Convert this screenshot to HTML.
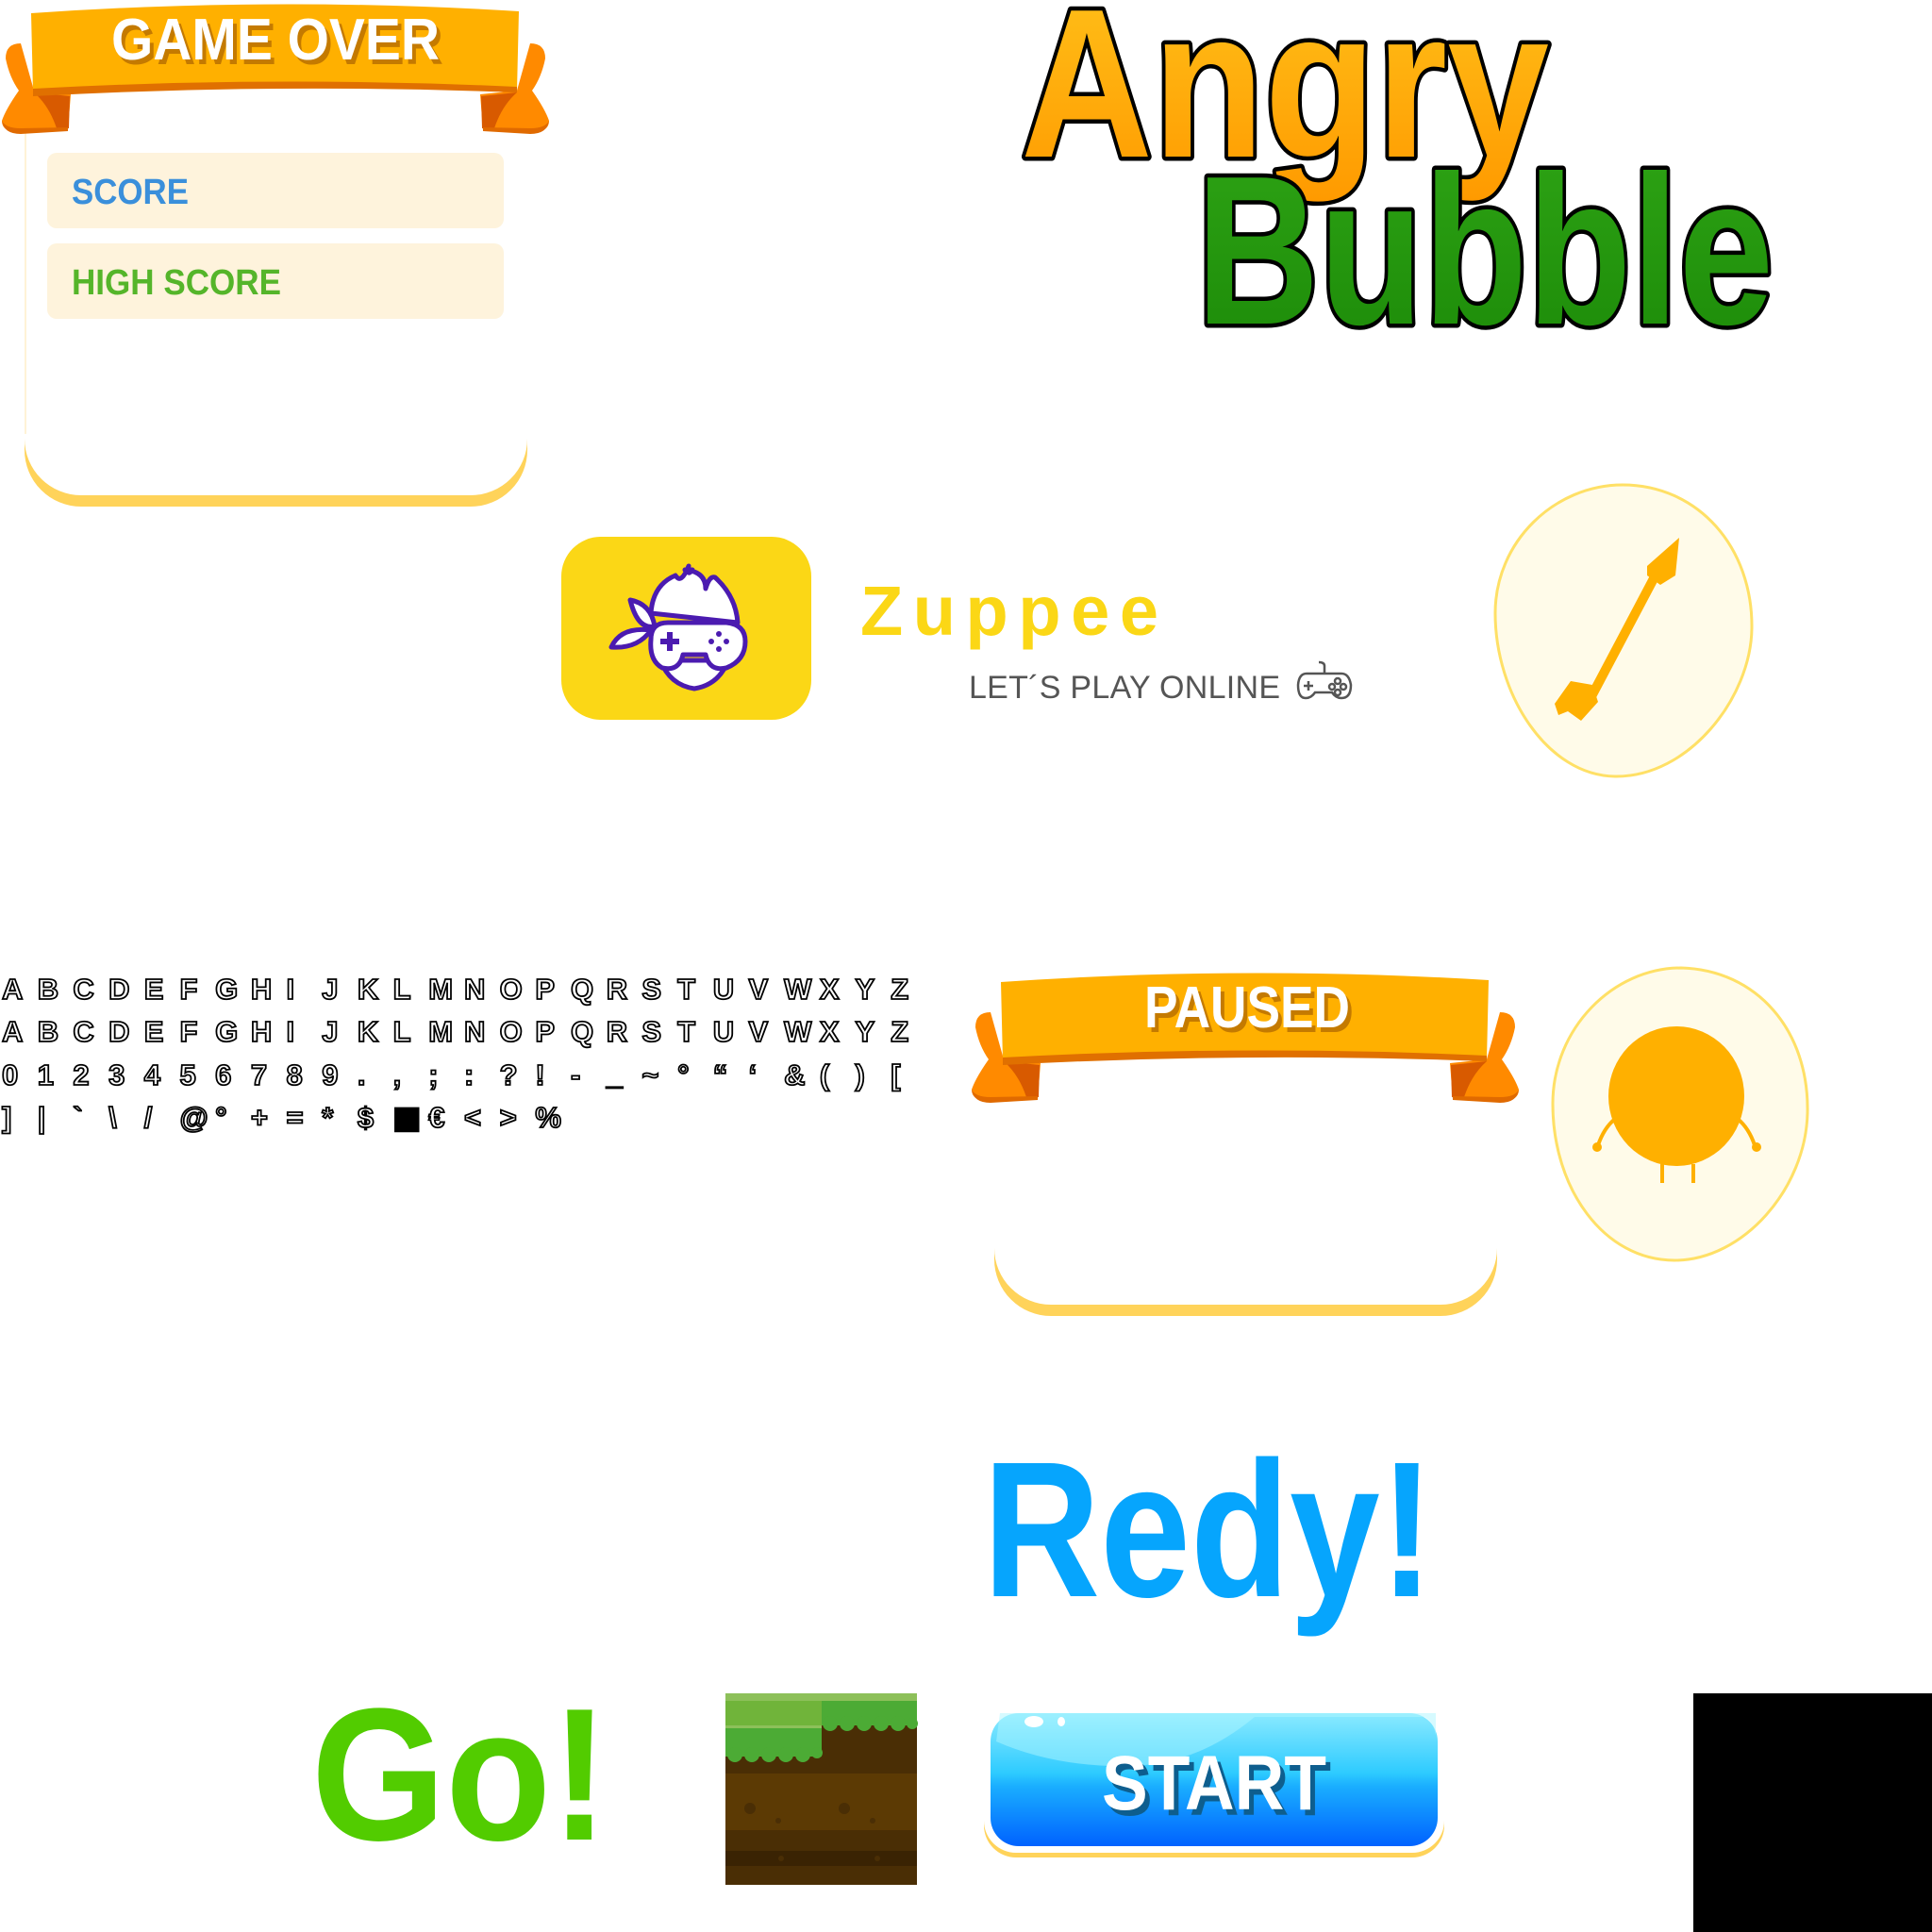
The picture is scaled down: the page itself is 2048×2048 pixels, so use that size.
<!DOCTYPE html>
<html><head><meta charset="utf-8"><style>
html,body{margin:0;padding:0;background:#fff;}
body{width:2048px;height:2048px;position:relative;overflow:hidden;font-family:"Liberation Sans",sans-serif;}
svg{position:absolute;left:0;top:0;}
.row{position:absolute;left:2px;display:flex;font-weight:bold;font-size:31px;color:#fff;-webkit-text-stroke:1.8px #000;line-height:34px;}
.row span{display:block;width:37.7px;text-align:left;}
</style></head><body>
<svg width="2048" height="2048" viewBox="0 0 2048 2048">
<defs>
<linearGradient id="og" x1="0" y1="0" x2="0" y2="1"><stop offset="0" stop-color="#FFC21A"/><stop offset="1" stop-color="#FF9A00"/></linearGradient>
<linearGradient id="gg" x1="0" y1="0" x2="0" y2="1"><stop offset="0" stop-color="#2EA415"/><stop offset="1" stop-color="#1C8A08"/></linearGradient>
<linearGradient id="bg" x1="0" y1="0" x2="0" y2="1"><stop offset="0" stop-color="#8BEAFF"/><stop offset="0.45" stop-color="#2ECBFF"/><stop offset="0.55" stop-color="#1AAEFF"/><stop offset="1" stop-color="#0062FF"/></linearGradient>
<g id="ribL">
<path d="M22 46 Q6 46 6 62 Q10 82 20 96 Q6 116 2 128 Q2 140 20 140 L72 138 L75 100 L36 96 Z" fill="#FF8A00"/>
<path d="M36 98 L74 102 L73 136 L60 136 Q52 112 36 98 Z" fill="#D85A00"/>
<path d="M2 128 Q4 142 22 142 L72 139 L72 135 L22 136 Q6 136 2 128 Z" fill="#E06A00"/>
</g>
</defs>

<!-- GAME OVER panel -->
<g>
<rect x="26" y="112" width="533" height="425" rx="60" fill="#FFD35A"/>
<rect x="26" y="100" width="533" height="425" rx="60" fill="#fff"/>
<rect x="26" y="100" width="2" height="360" fill="#FFF3D6"/>
<use href="#ribL"/>
<use href="#ribL" transform="translate(584,0) scale(-1,1)"/>
<path d="M33 14 Q292 -4 550 12 L548 96 Q292 82 35 98 Z" fill="#FFB000"/>
<path d="M35 94 Q292 80 548 92 L548 98 Q292 88 35 102 Z" fill="#E07000"/>
<text x="296" y="68" text-anchor="middle" font-family="Liberation Sans" font-weight="bold" font-size="62" fill="#C47A00" textLength="348" lengthAdjust="spacingAndGlyphs">GAME OVER</text>
<text x="292" y="63" text-anchor="middle" font-family="Liberation Sans" font-weight="bold" font-size="62" fill="#fff" textLength="348" lengthAdjust="spacingAndGlyphs">GAME OVER</text>
<rect x="50" y="162" width="484" height="80" rx="10" fill="#FEF3DC"/>
<rect x="50" y="258" width="484" height="80" rx="10" fill="#FEF3DC"/>
<text x="76" y="216" font-family="Liberation Sans" font-weight="bold" font-size="38" fill="#3A8FDB" textLength="124" lengthAdjust="spacingAndGlyphs">SCORE</text>
<text x="76" y="312" font-family="Liberation Sans" font-weight="bold" font-size="38" fill="#55B52A" textLength="222" lengthAdjust="spacingAndGlyphs">HIGH SCORE</text>
</g>

<!-- PAUSED panel -->
<g transform="translate(1028,1027)">
<rect x="26" y="80" width="533" height="288" rx="60" fill="#FFD35A"/>
<rect x="26" y="70" width="533" height="286" rx="60" fill="#fff"/>
<use href="#ribL"/>
<use href="#ribL" transform="translate(584,0) scale(-1,1)"/>
<path d="M33 14 Q292 -4 550 12 L548 96 Q292 82 35 98 Z" fill="#FFB000"/>
<path d="M35 94 Q292 80 548 92 L548 98 Q292 88 35 102 Z" fill="#E07000"/>
<text x="298" y="67" text-anchor="middle" font-family="Liberation Sans" font-weight="bold" font-size="62" fill="#C47A00" textLength="218" lengthAdjust="spacingAndGlyphs">PAUSED</text>
<text x="294" y="62" text-anchor="middle" font-family="Liberation Sans" font-weight="bold" font-size="62" fill="#fff" textLength="218" lengthAdjust="spacingAndGlyphs">PAUSED</text>
</g>

<!-- Angry Bubble -->
<text x="1082" y="166" font-family="Liberation Sans" font-weight="bold" font-size="225" fill="url(#og)" stroke="#000" stroke-width="9" stroke-linejoin="round" paint-order="stroke" textLength="560" lengthAdjust="spacingAndGlyphs">Angry</text>
<text x="1268" y="343" font-family="Liberation Sans" font-weight="bold" font-size="225" fill="url(#gg)" stroke="#000" stroke-width="9" stroke-linejoin="round" paint-order="stroke" textLength="612" lengthAdjust="spacingAndGlyphs">Bubble</text>

<!-- Zuppee icon -->
<rect x="595" y="569" width="265" height="194" rx="42" fill="#FBD716"/>
<g fill="#fff" stroke="#4B1BB0" stroke-width="5" stroke-linejoin="round">
<path d="M690 650 Q692 620 716 610 Q722 620 730 600 Q728 612 734 604 L726 604 Q748 606 748 624 Q752 610 758 612 Q780 632 782 660 Z"/>
<path d="M700 700 Q710 726 736 730 Q762 726 772 700 Z"/>
<path d="M668 636 Q690 640 694 664 Q676 668 668 636 Z"/>
<path d="M648 686 Q658 664 690 668 Q676 688 648 686 Z"/>
<path d="M690 678 Q690 660 708 660 L770 660 Q790 662 790 680 Q790 700 770 708 Q752 712 748 694 L724 694 Q720 712 702 708 Q688 700 690 678 Z"/>
</g>
<g fill="#4B1BB0">
<rect x="700" y="677" width="20" height="6"/><rect x="707" y="670" width="6" height="20"/>
<circle cx="762" cy="672" r="3"/><circle cx="770" cy="680" r="3"/><circle cx="762" cy="688" r="3"/><circle cx="754" cy="680" r="3"/>
</g>

<!-- Zuppee text -->
<text x="912" y="673" font-family="Liberation Sans" font-weight="bold" font-size="74" fill="#FBD716" textLength="316">Zuppee</text>
<text x="1027" y="740" font-family="Liberation Sans" font-size="34" fill="#555" textLength="330">LET´S PLAY ONLINE</text>
<g fill="none" stroke="#555" stroke-width="2.5">
<path d="M1385 714 Q1377 714 1376 726 Q1376 740 1384 740 Q1390 740 1394 734 L1412 734 Q1416 740 1422 740 Q1432 740 1432 726 Q1430 714 1422 714 Z"/>
<path d="M1404 714 L1404 706 Q1404 702 1398 702"/>
<path d="M1382 727 L1392 727 M1387 722 L1387 732"/>
<circle cx="1418" cy="722" r="3"/><circle cx="1424" cy="728" r="3"/><circle cx="1418" cy="734" r="3"/><circle cx="1412" cy="728" r="3"/>
</g>

<!-- Egg 1 with arrow -->
<path d="M1720 514 C1800 514 1858 580 1857 666 C1856 740 1790 824 1712 823 C1640 822 1585 736 1585 650 C1585 574 1648 514 1720 514 Z" fill="#FFFBE9" stroke="#FFE066" stroke-width="3"/>
<g fill="#FFB000">
<line x1="1760" y1="600" x2="1685" y2="742" stroke="#FFB000" stroke-width="10"/>
<path d="M1780 570 L1776 610 L1760 620 L1746 610 L1746 600 Z"/>
<path d="M1665 722 L1688 726 L1694 744 L1676 764 L1662 754 L1652 758 L1648 746 Z"/>
</g>

<!-- Egg 2 with character -->
<path d="M1782 1026 C1862 1028 1918 1092 1916 1180 C1914 1260 1848 1336 1775 1336 C1700 1336 1646 1260 1646 1170 C1646 1090 1710 1026 1782 1026 Z" fill="#FFFBE9" stroke="#FFE066" stroke-width="3"/>
<g fill="#FFB000" stroke="#FFB000">
<ellipse cx="1777" cy="1162" rx="72" ry="74" stroke="none"/>
<path d="M1712 1186 Q1700 1196 1694 1214" fill="none" stroke-width="4"/>
<path d="M1842 1186 Q1854 1196 1860 1214" fill="none" stroke-width="4"/>
<circle cx="1693" cy="1216" r="5" stroke="none"/><circle cx="1862" cy="1216" r="5" stroke="none"/>
<path d="M1762 1234 L1762 1254 M1795 1234 L1795 1254" stroke-width="4"/>
</g>

<!-- Redy! / Go! -->
<text x="1042" y="1692" font-family="Liberation Sans" font-weight="bold" font-size="205" fill="#06A5FD" textLength="478" lengthAdjust="spacingAndGlyphs">Redy!</text>
<text x="330" y="1950" font-family="Liberation Sans" font-weight="bold" font-size="200" fill="#52CC00" textLength="315" lengthAdjust="spacingAndGlyphs">Go!</text>

<!-- Grass tile -->
<g>
<rect x="769" y="1795" width="203" height="203" fill="#4A2E05"/>
<rect x="769" y="1795" width="203" height="8" fill="#8DC05A"/>
<rect x="769" y="1803" width="102" height="26" fill="#70B43A"/>
<rect x="769" y="1829" width="102" height="3" fill="#8DC05A"/>
<rect x="769" y="1832" width="102" height="30" fill="#4CAB35"/>
<rect x="871" y="1803" width="101" height="26" fill="#4CAB35"/>
<g fill="#4CAB35">
<circle cx="779" cy="1860" r="8"/><circle cx="797" cy="1860" r="8"/><circle cx="815" cy="1860" r="8"/><circle cx="833" cy="1860" r="8"/><circle cx="851" cy="1860" r="8"/><circle cx="866" cy="1858" r="6"/>
<circle cx="880" cy="1827" r="8"/><circle cx="898" cy="1827" r="8"/><circle cx="916" cy="1827" r="8"/><circle cx="934" cy="1827" r="8"/><circle cx="952" cy="1827" r="8"/><circle cx="967" cy="1827" r="6"/>
</g>
<rect x="769" y="1880" width="203" height="60" fill="#5C3A04"/>
<rect x="769" y="1962" width="203" height="16" fill="#3A2303"/>
<g fill="#4A2E05"><circle cx="795" cy="1917" r="6"/><circle cx="895" cy="1917" r="6"/><circle cx="825" cy="1930" r="3"/><circle cx="925" cy="1930" r="3"/><circle cx="828" cy="1970" r="3"/><circle cx="930" cy="1970" r="3"/></g>
</g>

<!-- START button -->
<rect x="1043" y="1818" width="488" height="151" rx="34" fill="#FFD35A"/>
<rect x="1043" y="1814" width="488" height="150" rx="34" fill="#fff"/>
<rect x="1050" y="1816" width="474" height="141" rx="30" fill="url(#bg)"/>
<path d="M1056 1846 Q1120 1874 1200 1872 Q1270 1870 1330 1820 L1510 1820 Q1520 1826 1522 1840 L1522 1816 L1060 1816 Z" fill="#AEF6FF" opacity="0.5"/>
<ellipse cx="1096" cy="1825" rx="10" ry="6" fill="#fff"/>
<ellipse cx="1125" cy="1825" rx="4" ry="5" fill="#fff"/>
<text x="1292" y="1924" text-anchor="middle" font-family="Liberation Sans" font-weight="bold" font-size="82" fill="#0E5E8E" textLength="238" lengthAdjust="spacingAndGlyphs">START</text>
<text x="1287" y="1918" text-anchor="middle" font-family="Liberation Sans" font-weight="bold" font-size="82" fill="#fff" textLength="238" lengthAdjust="spacingAndGlyphs">START</text>

<!-- Black square -->
<rect x="1795" y="1795" width="253" height="253" fill="#000"/>
</svg>

<div class="row" style="top:1032px"><span>A</span><span>B</span><span>C</span><span>D</span><span>E</span><span>F</span><span>G</span><span>H</span><span>I</span><span>J</span><span>K</span><span>L</span><span>M</span><span>N</span><span>O</span><span>P</span><span>Q</span><span>R</span><span>S</span><span>T</span><span>U</span><span>V</span><span>W</span><span>X</span><span>Y</span><span>Z</span></div>
<div class="row" style="top:1077px"><span>A</span><span>B</span><span>C</span><span>D</span><span>E</span><span>F</span><span>G</span><span>H</span><span>I</span><span>J</span><span>K</span><span>L</span><span>M</span><span>N</span><span>O</span><span>P</span><span>Q</span><span>R</span><span>S</span><span>T</span><span>U</span><span>V</span><span>W</span><span>X</span><span>Y</span><span>Z</span></div>
<div class="row" style="top:1123px"><span>0</span><span>1</span><span>2</span><span>3</span><span>4</span><span>5</span><span>6</span><span>7</span><span>8</span><span>9</span><span>.</span><span>,</span><span>;</span><span>:</span><span>?</span><span>!</span><span>-</span><span>_</span><span>~</span><span>°</span><span>“</span><span>‘</span><span>&amp;</span><span>(</span><span>)</span><span>[</span></div>
<div class="row" style="top:1168px"><span>]</span><span>|</span><span>`</span><span>\</span><span>/</span><span>@</span><span>°</span><span>+</span><span>=</span><span>*</span><span>$</span><span>▦</span><span>€</span><span>&lt;</span><span>&gt;</span><span>%</span></div>
</body></html>
